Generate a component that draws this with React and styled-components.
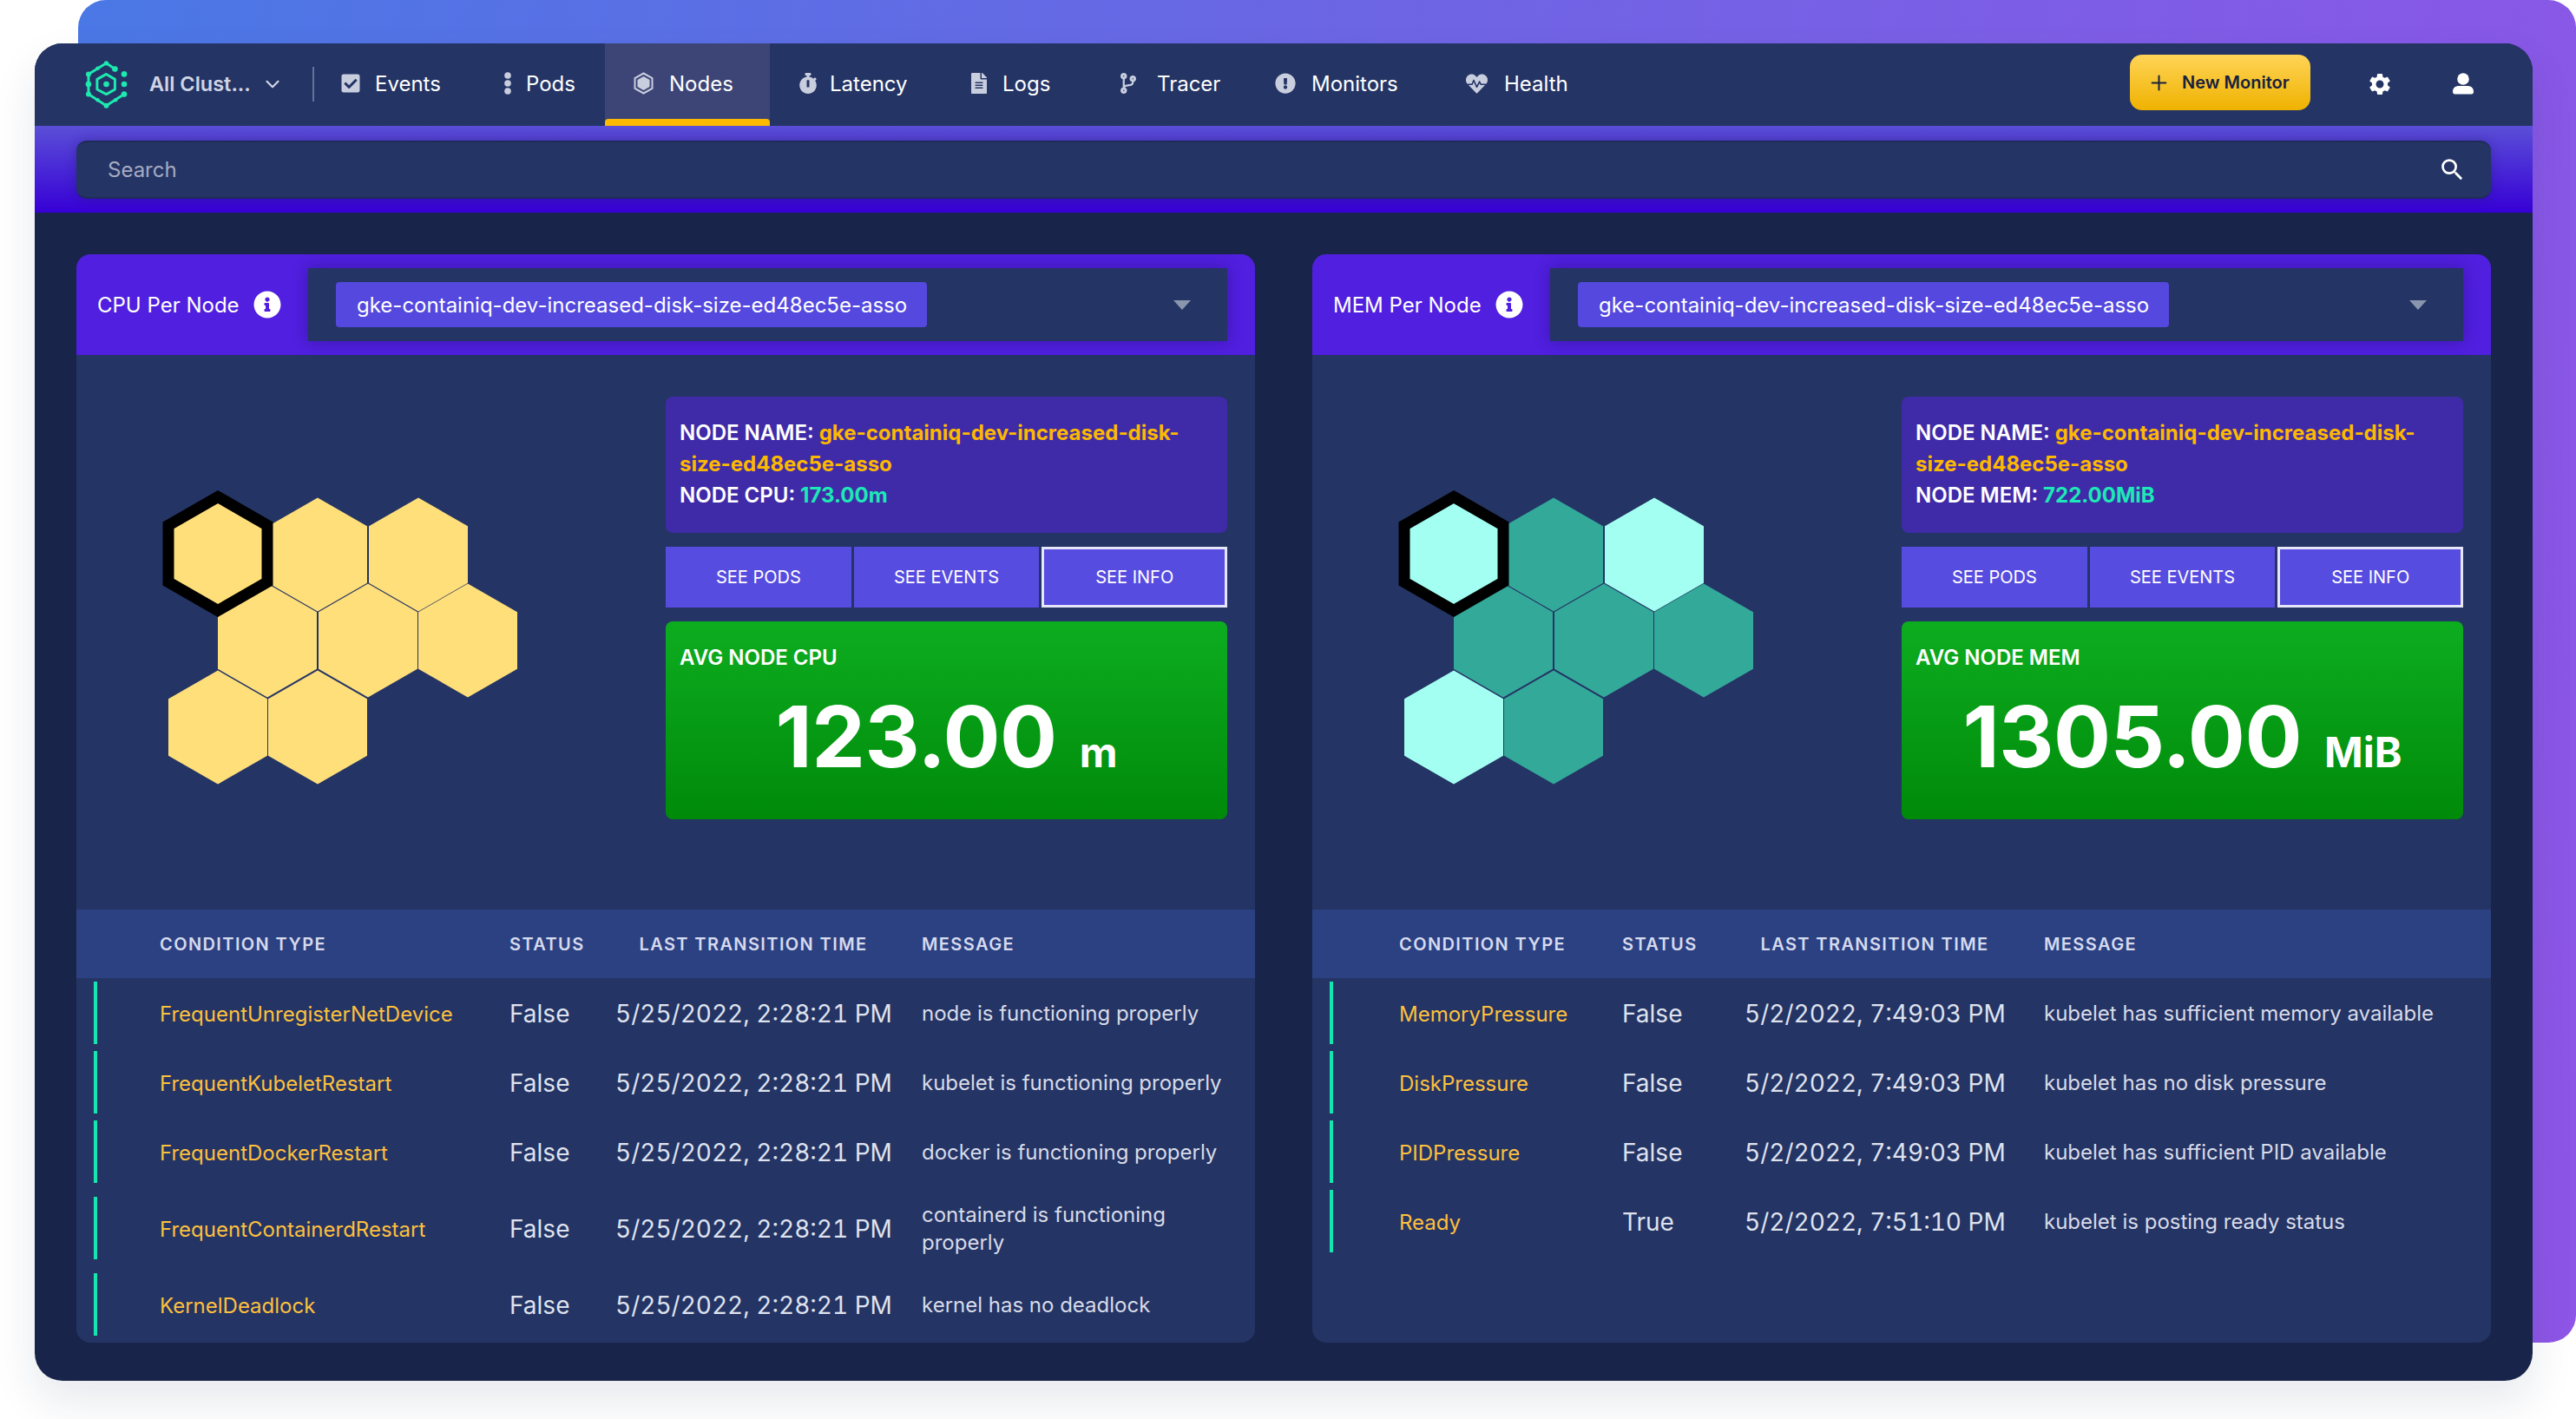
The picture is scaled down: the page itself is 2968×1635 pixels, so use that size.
import React from "react";
import styled, { createGlobalStyle } from "styled-components";
import { FaCheckSquare, FaStopwatch, FaFileAlt, FaCodeBranch, FaExclamationCircle, FaHeartbeat, FaInfoCircle } from "react-icons/fa";
import { MdSettings, MdSearch } from "react-icons/md";
import { ChevronDown, Plus } from "lucide-react";

const GlobalStyle = createGlobalStyle`
  html, body {
    margin: 0;
    padding: 0;
    background: #fff;
  }
  body {
    font-family: Inter, "Liberation Sans", sans-serif;
    -webkit-font-smoothing: antialiased;
  }
  * {
    box-sizing: border-box;
  }
`;

const Page = styled.div`
  position: relative;
  width: 2968px;
  height: 1635px;
  padding: 50px 50px 44px 40px;
  overflow: hidden;
`;

const Backdrop = styled.div`
  position: absolute;
  left: 90px;
  top: 0;
  right: 0;
  height: 1547px;
  border-radius: 32px;
  background: linear-gradient(100deg, #4a78e5 0%, #6b66e4 45%, #8e55e6 100%);
`;

const Window = styled.div`
  position: relative;
  height: 1541px;
  border-radius: 32px;
  background: #18244a;
  overflow: hidden;
  display: flex;
  flex-direction: column;
`;

const WindowShadow = styled.div`
  position: relative;
  border-radius: 32px;
  box-shadow: 0 24px 50px rgba(24, 36, 74, 0.1);
`;

///////////////////////////////Header
const Nav = styled.div`
  height: 95px;
  flex: none;
  background: #243464;
  display: flex;
  align-items: stretch;
  padding: 0 68px 0 56px;
`;

const Brand = styled.div`
  display: flex;
  align-items: center;
  width: 264px;
  margin-top: -2px;
`;

const BrandName = styled.span`
  margin-left: 23px;
  font-size: 23.5px;
  font-weight: 600;
  color: #d0d4e4;
  white-space: nowrap;
`;

const BrandCaret = styled.span`
  display: flex;
  margin-left: 12px;
  color: #d0d4e4;
`;

const Divider = styled.div`
  width: 2px;
  height: 40px;
  align-self: center;
  background: #68719a;
  margin-top: -2px;
`;

const Tabs = styled.div`
  display: flex;
  flex: 1;
`;

const Tab = styled.div`
  position: relative;
  width: ${(p) => p.$w}px;
  padding-left: ${(p) => p.$pl}px;
  padding-bottom: 3px;
  display: flex;
  align-items: center;
  gap: ${(p) => p.$gap}px;
  background: ${(p) => (p.$active ? "#3d4576" : "transparent")};
  color: #fff;
  font-size: 24px;
  &::after {
    content: "";
    display: ${(p) => (p.$active ? "block" : "none")};
    position: absolute;
    left: 0;
    right: 0;
    bottom: 0;
    height: 8px;
    border-radius: 4px 4px 0 0;
    background: #fdb900;
  }
`;

const TabIcon = styled.span`
  width: 28px;
  height: 28px;
  flex: none;
  display: flex;
  align-items: center;
  justify-content: center;
  color: #c9cedf;
`;

const NewMonitor = styled.button`
  width: 208px;
  height: 64px;
  margin-top: 13px;
  margin-right: 65px;
  border: 0;
  border-radius: 14px;
  background: linear-gradient(180deg, #ffd457 0%, #efb200 100%);
  color: #18213f;
  font-family: inherit;
  font-size: 20px;
  font-weight: 600;
  display: flex;
  align-items: center;
  gap: 13px;
  padding: 0 0 0 20px;
`;

const NavIcons = styled.div`
  display: flex;
  align-items: center;
  gap: 69px;
  color: #fff;
  margin-top: -2px;
`;

const SearchBand = styled.div`
  height: 100px;
  flex: none;
  padding: 17px 48px 16px 48px;
  background: linear-gradient(180deg, #5a4fd7 0%, #3700d6 100%);
`;

const SearchBox = styled.div`
  height: 67px;
  border-radius: 12px;
  background: #243464;
  border-top: 2px solid #1f2c58;
  border-bottom: 2px solid #1f2c58;
  box-shadow: 0 0 14px rgba(20, 20, 70, 0.3);
  display: flex;
  align-items: center;
  justify-content: space-between;
  padding: 0 28px 0 36px;
  color: #a4abc2;
  font-size: 24px;
`;

const SearchIcon = styled.span`
  display: flex;
  color: #fff;
`;

///////////////////////////////Panels
const Content = styled.div`
  flex: 1;
  display: grid;
  grid-template-columns: 1358px 1358px;
  column-gap: 66px;
  padding: 48px 0 44px 48px;
`;

const Panel = styled.div`
  display: flex;
  flex-direction: column;
  background: #243464;
  border-radius: 16px;
  overflow: hidden;
`;

const PanelHeader = styled.div`
  height: 116px;
  flex: none;
  display: flex;
  align-items: center;
  padding: 0 32px 0 24px;
  background: #501fe0;
  color: #fff;
  font-size: 24px;
`;

const PanelTitle = styled.div`
  width: ${(p) => p.$w}px;
  flex: none;
  display: flex;
  align-items: center;
  gap: 16px;
  white-space: nowrap;
`;

const SelectBox = styled.div`
  flex: 1;
  height: 84px;
  background: #243464;
  box-shadow: 0 0 16px rgba(20, 10, 60, 0.35);
  display: flex;
  align-items: center;
  justify-content: space-between;
  padding: 0 42px 0 32px;
`;

const SelectTag = styled.div`
  width: 681px;
  height: 52px;
  border-radius: 4px;
  background: #5448de;
  display: flex;
  align-items: center;
  padding-left: 24px;
  white-space: nowrap;
`;

const Caret = styled.div`
  width: 0;
  height: 0;
  border-left: 10px solid transparent;
  border-right: 10px solid transparent;
  border-top: 11px solid #8a96ad;
`;

const PanelBody = styled.div`
  height: 639px;
  flex: none;
  display: flex;
  justify-content: space-between;
  padding: 48px 32px 0 92px;
`;

const HexMap = styled.svg`
  width: 440px;
  height: 350px;
  margin-top: 103px;
  flex: none;
`;

const SideColumn = styled.div`
  width: 647px;
  flex: none;
  display: flex;
  flex-direction: column;
  gap: 16px;
`;

const InfoBox = styled.div`
  height: 157px;
  border-radius: 8px;
  background: #3f2ba8;
  padding: 24px 16px 0;
  color: #fff;
  font-size: 24px;
  font-weight: 600;
  line-height: 36px;
`;

const NodeName = styled.span`
  color: #fdb900;
  font-weight: 700;
`;

const NodeValue = styled.span`
  color: #1de9b6;
  font-weight: 700;
`;

const Buttons = styled.div`
  height: 70px;
  display: grid;
  grid-template-columns: 1fr 1fr 1fr;
  gap: 3px;
`;

const SeeButton = styled.div`
  display: flex;
  align-items: center;
  justify-content: center;
  background: #574ce0;
  color: #fff;
  font-size: 20px;
  border: ${(p) => (p.$active ? "3px solid #e6e6fa" : "0")};
`;

const AvgCard = styled.div`
  height: 228px;
  border-radius: 8px;
  background: linear-gradient(180deg, #0dad20 0%, #008a0a 100%);
  padding: 26px 16px 0;
  color: #fff;
`;

const AvgTitle = styled.div`
  font-size: 24px;
  font-weight: 600;
  line-height: 32px;
`;

const AvgValue = styled.div`
  margin-top: 17px;
  text-align: center;
  font-size: 98px;
  font-weight: 700;
  letter-spacing: -0.5px;
  line-height: 116px;
  white-space: nowrap;
`;

const AvgUnit = styled.span`
  font-size: 48px;
  font-weight: 700;
  letter-spacing: 0;
  margin-left: 26px;
`;

///////////////////////////////Table
const TableHead = styled.div`
  height: 79px;
  flex: none;
  display: grid;
  grid-template-columns: ${(p) => p.$offset}px ${(p) => p.$cols};
  align-items: center;
  background: #2c4182;
  color: #d6daee;
  font-size: 20px;
  font-weight: 600;
  letter-spacing: 1.4px;
`;

const Row = styled.div`
  min-height: 80px;
  display: grid;
  grid-template-columns: 20px 4px ${(p) => p.$offset - 24}px ${(p) => p.$cols};
  align-items: center;
  padding: 17px 0 15px;
`;

const RowBar = styled.div`
  grid-column: 2;
  width: 4px;
  height: 72px;
  margin: -19px 0 -17px;
  background: #15e6b0;
`;

const DateCell = styled.div`
  text-align: center;
  padding-right: ${(p) => p.$pr}px;
`;

const DateText = styled(DateCell)`
  font-size: 28px;
  font-variant-numeric: tabular-nums;
  color: #dfe2ee;
  white-space: nowrap;
`;

const NameCell = styled.div`
  grid-column: 4;
  color: #fdc03e;
  font-size: 24px;
  white-space: nowrap;
`;

const StatusCell = styled.div`
  font-size: 28px;
  color: #dfe2ee;
`;

const MessageCell = styled.div`
  font-size: 24px;
  line-height: 32px;
  color: #d8dbe8;
  padding-right: 24px;
`;

const HEX_W = 114;
const HEX_H = 131;

const hexPoints = (cx, cy) =>
  [
    [cx, cy - HEX_H / 2],
    [cx + HEX_W / 2, cy - HEX_H / 4],
    [cx + HEX_W / 2, cy + HEX_H / 4],
    [cx, cy + HEX_H / 2],
    [cx - HEX_W / 2, cy + HEX_H / 4],
    [cx - HEX_W / 2, cy - HEX_H / 4],
  ]
    .map((p) => p.join(","))
    .join(" ");

const HEX_CENTERS = [
  [186, 79],
  [302, 79],
  [128, 178],
  [244, 178],
  [359, 178],
  [71, 278],
  [186, 278],
];

const Hexes = ({ first, colors }) => (
  <HexMap viewBox="0 0 440 350">
    {HEX_CENTERS.map(([x, y], i) => (
      <polygon key={i} points={hexPoints(x, y)} fill={colors[i]} />
    ))}
    <polygon points={hexPoints(71, 78)} fill={first} stroke="#000" strokeWidth="13" />
  </HexMap>
);

const Logo = () => (
  <svg width="53" height="60" viewBox="30 30 160 180" fill="none" stroke="#1de9b0" strokeWidth="9" strokeLinejoin="round">
    <polyline points="140,67 110,47 48,85 48,155 110,195 172,155" />
    <polygon points="110,85 140,103 140,138 110,155 78,138 78,103" />
    <g fill="#1de9b0" stroke="none">
      {[[140, 67, 10], [110, 47, 8], [80, 65, 7], [48, 85, 9], [48, 120, 10], [48, 155, 9], [80, 175, 7], [110, 195, 9], [142, 175, 7], [172, 155, 10], [172, 85, 10], [172, 120, 10], [110, 120, 10]].map(([x, y, r]) => (
        <circle key={`${x}-${y}`} cx={x} cy={y} r={r} />
      ))}
    </g>
  </svg>
);

const PodsIcon = () => (
  <svg width="14" height="28" viewBox="0 0 14 28" fill="currentColor">
    <circle cx="7" cy="5" r="3.8" />
    <circle cx="7" cy="14" r="3.8" />
    <circle cx="7" cy="23" r="3.8" />
  </svg>
);

const NodesIcon = () => (
  <svg width="23" height="26" viewBox="0 0 23 26">
    <polygon points="11.5,1.5 21.5,7 21.5,19 11.5,24.5 1.5,19 1.5,7" fill="none" stroke="currentColor" strokeWidth="2" />
    <polygon points="11.5,5 18.5,9 18.5,17 11.5,21 4.5,17 4.5,9" fill="currentColor" />
  </svg>
);

const UserIcon = () => (
  <svg width="24" height="25" viewBox="0 0 24 25" fill="#fff">
    <circle cx="12" cy="7" r="6.8" />
    <path d="M0 21.5C0 17 3.5 15 7 15h10c3.5 0 7 2 7 6.5 0 1.8-.8 3-2.5 3h-19C.8 24.5 0 23.3 0 21.5z" />
  </svg>
);

const TABS = [
  { label: "Events", w: 179, pl: 28, gap: 14, icon: <FaCheckSquare size={24} /> },
  { label: "Pods", w: 156, pl: 30, gap: 7, icon: <PodsIcon /> },
  { label: "Nodes", w: 190, pl: 30, gap: 16, icon: <NodesIcon />, active: true },
  { label: "Latency", w: 197, pl: 30, gap: 11, icon: <FaStopwatch size={24} /> },
  { label: "Logs", w: 172, pl: 30, gap: 13, icon: <FaFileAlt size={24} /> },
  { label: "Tracer", w: 181, pl: 30, gap: 19, icon: <FaCodeBranch size={24} /> },
  { label: "Monitors", w: 220, pl: 30, gap: 16, icon: <FaExclamationCircle size={24} /> },
  { label: "Health", w: 150, pl: 30, gap: 18, icon: <FaHeartbeat size={25} /> },
];

const PANELS = [
  {
    title: "CPU Per Node",
    titleWidth: 243,
    kind: "CPU",
    value: "173.00m",
    avg: "123.00",
    unit: "m",
    first: "#ffdf7a",
    colors: Array(7).fill("#ffdf7a"),
    offset: 96,
    cols: "403px 122px 353px 1fr",
    datePad: 35,
    rows: [
      ["FrequentUnregisterNetDevice", "False", "5/25/2022, 2:28:21 PM", "node is functioning properly"],
      ["FrequentKubeletRestart", "False", "5/25/2022, 2:28:21 PM", "kubelet is functioning properly"],
      ["FrequentDockerRestart", "False", "5/25/2022, 2:28:21 PM", "docker is functioning properly"],
      ["FrequentContainerdRestart", "False", "5/25/2022, 2:28:21 PM", "containerd is functioning properly"],
      ["KernelDeadlock", "False", "5/25/2022, 2:28:21 PM", "kernel has no deadlock"],
    ],
  },
  {
    title: "MEM Per Node",
    titleWidth: 250,
    kind: "MEM",
    value: "722.00MiB",
    avg: "1305.00",
    unit: "MiB",
    first: "#a3fff1",
    colors: ["#33a99a", "#a3fff1", "#33a99a", "#33a99a", "#33a99a", "#a3fff1", "#33a99a"],
    offset: 100,
    cols: "257px 141px 345px 1fr",
    datePad: 45,
    rows: [
      ["MemoryPressure", "False", "5/2/2022, 7:49:03 PM", "kubelet has sufficient memory available"],
      ["DiskPressure", "False", "5/2/2022, 7:49:03 PM", "kubelet has no disk pressure"],
      ["PIDPressure", "False", "5/2/2022, 7:49:03 PM", "kubelet has sufficient PID available"],
      ["Ready", "True", "5/2/2022, 7:51:10 PM", "kubelet is posting ready status"],
    ],
  },
];

const NodePanel = ({ panel }) => (
  <Panel>
    <PanelHeader>
      <PanelTitle $w={panel.titleWidth}>
        {panel.title} <FaInfoCircle size={32} />
      </PanelTitle>
      <SelectBox>
        <SelectTag>gke-containiq-dev-increased-disk-size-ed48ec5e-asso</SelectTag>
        <Caret />
      </SelectBox>
    </PanelHeader>

    <PanelBody>
      <Hexes first={panel.first} colors={panel.colors} />
      <SideColumn>
        <InfoBox>
          <div>
            NODE NAME: <NodeName>gke-containiq-dev-increased-disk-size-ed48ec5e-asso</NodeName>
          </div>
          <div>
            NODE {panel.kind}: <NodeValue>{panel.value}</NodeValue>
          </div>
        </InfoBox>
        <Buttons>
          <SeeButton>SEE PODS</SeeButton>
          <SeeButton>SEE EVENTS</SeeButton>
          <SeeButton $active>SEE INFO</SeeButton>
        </Buttons>
        <AvgCard>
          <AvgTitle>AVG NODE {panel.kind}</AvgTitle>
          <AvgValue>
            {panel.avg}
            <AvgUnit>{panel.unit}</AvgUnit>
          </AvgValue>
        </AvgCard>
      </SideColumn>
    </PanelBody>

    <TableHead $offset={panel.offset} $cols={panel.cols}>
      <div />
      <div>CONDITION TYPE</div>
      <div>STATUS</div>
      <DateCell $pr={panel.datePad}>LAST TRANSITION TIME</DateCell>
      <div>MESSAGE</div>
    </TableHead>
    {panel.rows.map(([name, status, time, message]) => (
      <Row key={name} $offset={panel.offset} $cols={panel.cols}>
        <RowBar />
        <NameCell>{name}</NameCell>
        <StatusCell>{status}</StatusCell>
        <DateText $pr={panel.datePad}>{time}</DateText>
        <MessageCell>{message}</MessageCell>
      </Row>
    ))}
  </Panel>
);

export default function App() {
  return (
    <Page>
      <GlobalStyle />
      <Backdrop />
      <WindowShadow>
        <Window>
          <Nav>
            <Brand>
              <Logo />
              <BrandName>All Clust...</BrandName>
              <BrandCaret>
                <ChevronDown size={26} strokeWidth={2} />
              </BrandCaret>
            </Brand>
            <Divider />
            <Tabs>
              {TABS.map((tab) => (
                <Tab key={tab.label} $w={tab.w} $pl={tab.pl} $gap={tab.gap} $active={tab.active}>
                  <TabIcon>{tab.icon}</TabIcon>
                  {tab.label}
                </Tab>
              ))}
            </Tabs>
            <NewMonitor>
              <Plus size={27} strokeWidth={1.8} />
              New Monitor
            </NewMonitor>
            <NavIcons>
              <MdSettings size={30} />
              <UserIcon />
            </NavIcons>
          </Nav>

          <SearchBand>
            <SearchBox>
              Search
              <SearchIcon>
                <MdSearch size={33} />
              </SearchIcon>
            </SearchBox>
          </SearchBand>

          <Content>
            {PANELS.map((panel) => (
              <NodePanel key={panel.title} panel={panel} />
            ))}
          </Content>
        </Window>
      </WindowShadow>
    </Page>
  );
}
